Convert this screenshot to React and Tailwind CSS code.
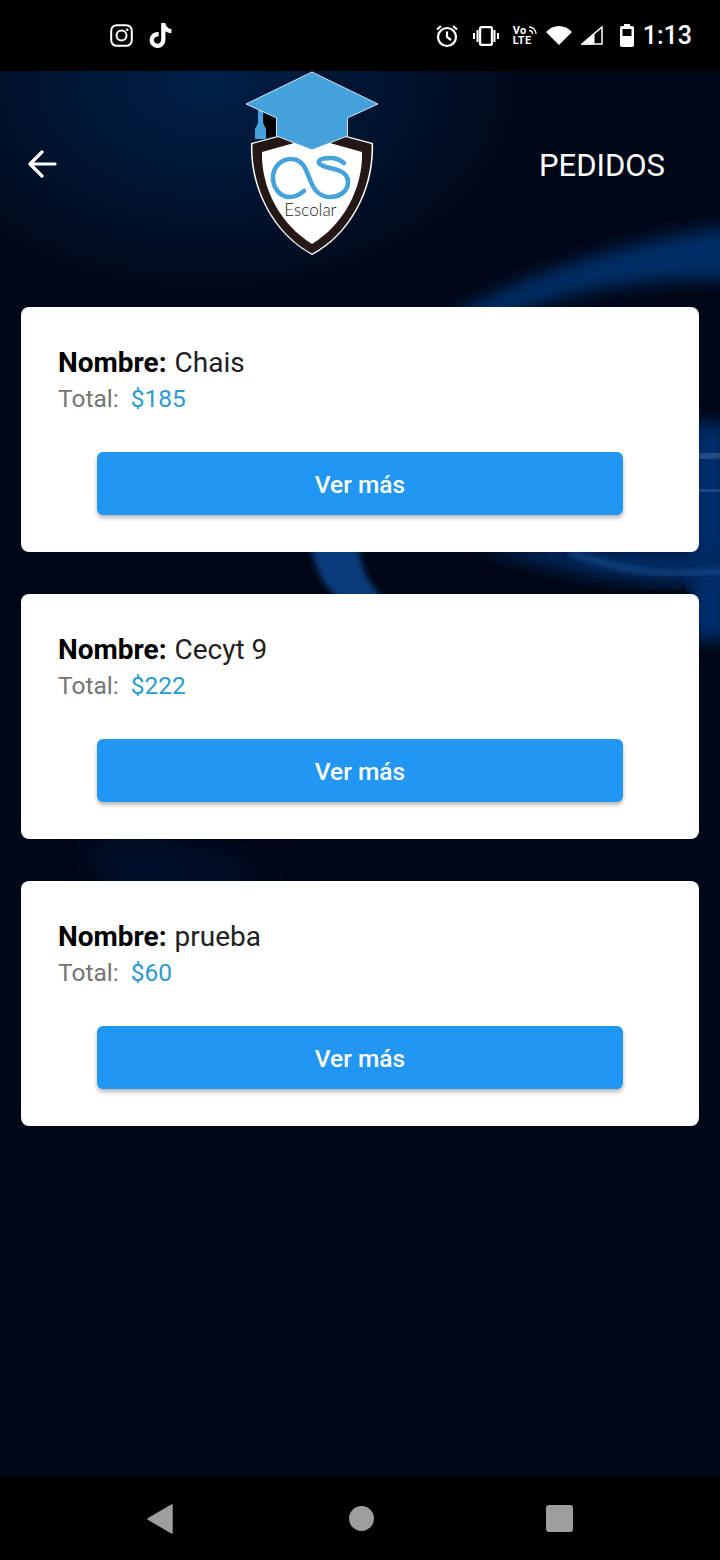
import React from 'react';
import { FaTiktok } from 'react-icons/fa';

const ROBOTO = "font-['Roboto',sans-serif]";

/* Smoky blue swirl behind the cards */
const Waves = () => (
    <svg className="absolute inset-0 w-full h-full" viewBox="0 71 720 1405" preserveAspectRatio="none" fill="none">
        <defs>
            <filter id="b20"><feGaussianBlur stdDeviation="20" /></filter>
            <filter id="b8"><feGaussianBlur stdDeviation="9" /></filter>
            <filter id="b3"><feGaussianBlur stdDeviation="3" /></filter>
        </defs>
        <path d="M450 315 C530 275 620 240 740 225 L740 280 C640 275 540 295 480 330 Z" fill="#06408a" opacity="0.7" filter="url(#b8)" />
        <path d="M690 420 C705 425 712 425 730 420 L730 640 L690 640 Z" fill="#06367c" opacity="0.85" filter="url(#b8)" />
        <path d="M695 458 C705 456 712 455 725 454" stroke="#9cc4ee" strokeWidth="3" opacity="0.7" filter="url(#b3)" />
        <path d="M695 490 C705 490 712 490 725 491" stroke="#7fb0e6" strokeWidth="3" opacity="0.6" filter="url(#b3)" />
        <path d="M310 545 C315 570 325 590 342 600 L385 600 C368 585 360 565 358 545 Z" fill="#0c4a96" opacity="0.8" filter="url(#b3)" />
        <path d="M470 545 C540 565 620 590 740 585 L740 545 Z" fill="#052a62" opacity="0.95" filter="url(#b8)" />
        <path d="M570 552 C620 572 670 578 730 570" stroke="#2f6cb8" strokeWidth="3" opacity="0.8" filter="url(#b3)" />
        <path d="M80 840 C140 850 220 860 300 880 L120 890 Z" fill="#05285c" opacity="0.45" filter="url(#b20)" />
    </svg>
);

/* Escolar shield with the graduation cap */
const Logo = () => (
    <svg width="134" height="186" viewBox="245 72 134 186" fill="none" className="shrink-0">
        <path d="M251 144 L312 128 L373 144 C375 190 350 236 312 256 C274 236 249 190 251 144 Z" fill="#fff" />
        <path d="M252.500 145 L312 129 L371.500 145 C373 190 349 235 312 254.500 C275 235 251 190 252.500 145 Z" fill="#231815" />
        <path d="M262 153 L312 139 L362 153 C363 190 343 226 312 245 C281 226 261 190 262 153 Z" fill="#fff" />
        <path d="M304 192 C299 196 295 198 290 198 C280 198 273 189 273 179 C273 168 281 160 291 160 C299 160 303 164 306 171 L311 183 C315 193 321 198 330 198 C340 198 348 192 348 183 C348 175 342 172 334 170 L326 168 C320 166 318 164 319 162 C321 159 326 159 331 159 C336 159 340 161 344 164" stroke="#45a2dc" strokeWidth="4.500" strokeLinecap="round" />
        <text x="310.500" y="217" textAnchor="middle" fontSize="17" fontWeight="300" fill="#231815" fontFamily="Lato, sans-serif">Escolar</text>
        <path d="M264 112 L277 118 L277 136 L264 139 Z" fill="#000" />
        <path d="M258 108 L263 108 L263 124 L266 130 L266 140 L255 140 L255 130 L258 124 Z" fill="#45a2dc" />
        <path d="M312 73 L378 105 L347.500 119 L347.500 137 L312 151 L276.500 137 L276.500 119 L246 105 Z" fill="#45a2dc" stroke="#fff" strokeWidth="0.800" strokeLinejoin="round" />
    </svg>
);

const StatusBar = () => (
    <div className={`${ROBOTO} h-[71px] bg-black flex items-center justify-between pl-[110px] pr-[28px] text-white shrink-0`}>
        <div className="flex items-center gap-[15px]">
            <svg width="23" height="23" viewBox="0 0 23 23" fill="none" stroke="#fff">
                <rect x="1.200" y="1.200" width="20.600" height="20.600" rx="5.500" strokeWidth="2" />
                <circle cx="11.500" cy="11.500" r="5" strokeWidth="2" />
                <circle cx="17.200" cy="5.800" r="1.300" fill="#fff" stroke="none" />
            </svg>
            <FaTiktok size={25} color="#fff" />
        </div>
        <div className="flex items-center">
            <svg width="24" height="24" viewBox="0 0 24 24" fill="none" stroke="#fff" strokeWidth="2.200" className="mr-[14px]">
                <circle cx="12" cy="13" r="9" />
                <path d="M12 7.500 V13 L16 16 M2 5.500 L6 2 M22 5.500 L18 2" />
            </svg>
            <svg width="26" height="20" viewBox="0 0 26 20" fill="#fff" className="mr-[14px]">
                <rect x="7" y="1" width="12" height="18" rx="2" fill="none" stroke="#fff" strokeWidth="2.400" />
                <rect x="3.500" y="4" width="2" height="12" />
                <rect x="20.500" y="4" width="2" height="12" />
                <rect x="0" y="7" width="2" height="6" />
                <rect x="24" y="7" width="2" height="6" />
            </svg>
            <div className="w-[23px] mr-[10px] flex flex-col items-start text-[11px] leading-[10px] font-bold tracking-[0.3px]">
                <span className="flex items-start">Vo
                    <svg width="9" height="9" viewBox="0 0 9 9" fill="none" stroke="#fff" strokeWidth="1.300" className="ml-[1px]">
                        <path d="M1 1 C5 1 8 4 8 8 M1 4.500 C3 4.500 4.500 6 4.500 8" />
                    </svg>
                </span>
                <span>LTE</span>
            </div>
            <svg width="26" height="19" viewBox="0 0 26 19" fill="#fff" className="mr-[9px]">
                <path d="M0 6 C7 -2 19 -2 26 6 L13 19 Z" />
            </svg>
            <svg width="22" height="19" viewBox="0 0 22 19" className="mr-[17px]">
                <path d="M1 18 L21 1 L21 18 Z" fill="none" stroke="#fff" strokeWidth="1.500" />
                <path d="M1 18 L13 8 L13 18 Z" fill="#fff" stroke="#fff" />
            </svg>
            <svg width="14" height="23" viewBox="0 0 14 23" className="mr-[9px]">
                <rect x="4" y="0" width="6" height="3" fill="#fff" />
                <rect x="0" y="2" width="14" height="21" rx="2" fill="#fff" />
                <rect x="2.500" y="5" width="9" height="7" fill="#000" />
            </svg>
            <span className="text-[25px] leading-none font-medium">1:13</span>
        </div>
    </div>
);

const PedidoCard = ({ nombre, total }) => (
    <div className="bg-white rounded-lg pt-[40px] pb-[37px]">
        <div className="px-[37px]">
            <div className="text-[28px] leading-[32px] text-[#212121]">
                <span className="font-bold text-black mr-[1px]">Nombre:</span> {nombre}
            </div>
            <div className="mt-[5px] text-[24.500px] leading-[30px] text-[#757575]">
                Total:
                <span className="ml-[12px] text-[#2b9bd3]">${total}</span>
            </div>
        </div>
        <button className="mt-[38px] mx-auto flex items-center justify-center pt-[3px] w-[526px] h-[63px] rounded-md bg-[#2196f3] text-white text-[24.500px] font-medium shadow-[0_3px_4px_rgba(0,0,0,0.28)]">
            Ver más
        </button>
    </div>
);

export default function App() {
    return (
        <div className={`${ROBOTO} w-[720px] h-[1560px] flex flex-col bg-black overflow-hidden`}>
            <StatusBar />

            <div className="relative flex-1 bg-[radial-gradient(ellipse_340px_230px_at_210px_10px,#00204a_0%,#011430_50%,#000716_100%)]">
                <Waves />

                <div className="relative">
                    {/* Header */}
                    <div className="h-[236px] flex items-start">
                        <div className="w-[245px] pl-[28px] pt-[79px]">
                            <svg width="29" height="28" viewBox="0 0 29 28" fill="none" stroke="#fff" strokeWidth="3.200" strokeLinecap="round" strokeLinejoin="round">
                                <path d="M27 14 H3 M14 2 L2 14 L14 26" />
                            </svg>
                        </div>
                        <Logo />
                        <div className="flex-1 pr-[55px] pt-[77px] text-right text-white text-[31px] leading-[36px]">PEDIDOS</div>
                    </div>

                    {/* Lista de pedidos */}
                    <div className="mx-[21px] flex flex-col gap-[42px]">
                        <PedidoCard nombre="Chais" total="185" />
                        <PedidoCard nombre="Cecyt 9" total="222" />
                        <PedidoCard nombre="prueba" total="60" />
                    </div>
                </div>
            </div>

            {/* Nav bar */}
            <div className="h-[84px] shrink-0 bg-black flex items-center justify-center">
                <svg width="26" height="30" viewBox="0 0 26 30" fill="#9e9e9e" className="mr-[176px] mt-[2px]">
                    <path d="M1 15 L25 1 L25 29 Z" stroke="#9e9e9e" strokeWidth="1.500" strokeLinejoin="round" />
                </svg>
                <div className="w-[25px] h-[25px] rounded-full bg-[#9e9e9e] mr-[172px]" />
                <div className="w-[27px] h-[27px] rounded-[3px] bg-[#9e9e9e]" />
            </div>
        </div>
    );
}
